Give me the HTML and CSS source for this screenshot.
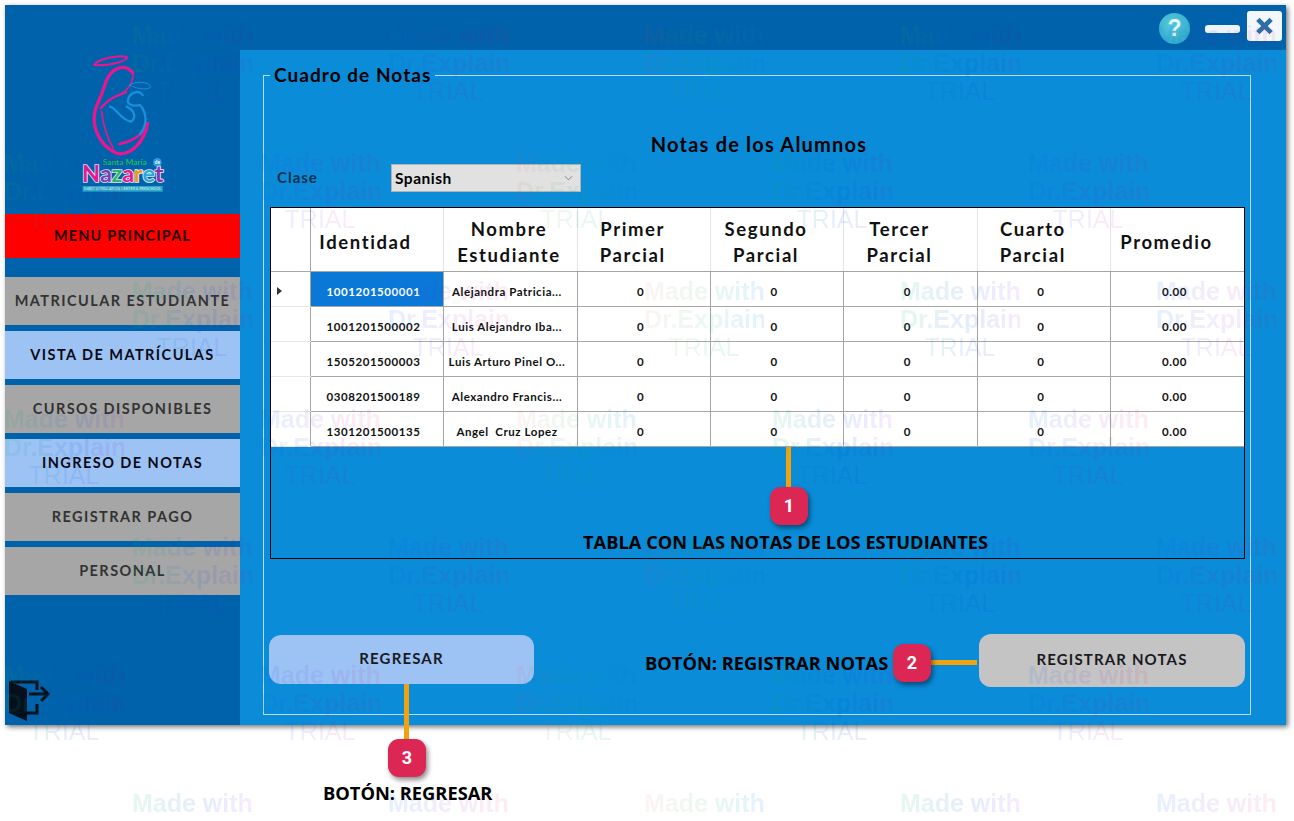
FILE: index.html
```html
<!DOCTYPE html>
<html lang="es">
<head>
<meta charset="utf-8">
<title>Cuadro de Notas</title>
<link rel="stylesheet" href="styles.css">
</head>
<body>
<div class="page">
  <div class="window">
    <aside class="sidebar">
      <svg class="logo" viewBox="0 0 360 480" role="img" aria-label="Santa María de Nazaret">
        <g class="pink">
          <path d="M103 75C112 58 170 44 200 50C208 60 160 78 103 75Z" stroke-width="6"/>
          <path d="M218 98C195 70 155 80 138 125C128 155 118 180 107 205C92 255 115 315 170 340C220 350 255 295 263 250" stroke-width="10"/>
          <path d="M218 98C222 125 205 150 178 165" stroke-width="5"/>
          <path d="M122 205C145 175 170 168 198 156" stroke-width="7"/>
          <path d="M125 215C130 260 145 300 160 325" stroke-width="5"/>
          <path d="M178 312C215 305 250 285 263 250" stroke-width="8"/>
        </g>
        <g class="blue">
          <path d="M208 135C225 122 268 125 272 140C268 150 235 150 208 135Z" stroke-width="3"/>
          <path d="M248 165C235 148 208 158 205 178C198 190 215 200 235 196" stroke-width="7"/>
          <path d="M150 200C170 205 178 235 212 245C232 232 222 210 200 200" stroke-width="7"/>
          <path d="M240 195C262 220 262 255 240 282" stroke-width="7"/>
        </g>
        <text class="logo-santa" x="128" y="374">Santa María</text>
        <circle class="logo-dot" cx="292" cy="367" r="13"/>
        <text class="logo-de" x="292" y="372">de</text>
        <text class="logo-name" x="188" y="426"><tspan class="c1">N</tspan><tspan class="c2">a</tspan><tspan class="c3">z</tspan><tspan class="c4">a</tspan><tspan class="c5">r</tspan><tspan class="c6">e</tspan><tspan class="c7">t</tspan></text>
        <rect class="logo-band" x="68" y="438" width="240" height="17"/>
        <text class="logo-sub" x="188" y="450">EARLY STIMULATION CENTER &amp; PRESCHOOL</text>
      </svg>
      <div class="menu-head">MENU PRINCIPAL</div>
      <nav class="menu">
        <a class="item grey">MATRICULAR ESTUDIANTE</a>
        <a class="item light">VISTA DE MATRÍCULAS</a>
        <a class="item grey">CURSOS DISPONIBLES</a>
        <a class="item light">INGRESO DE NOTAS</a>
        <a class="item grey">REGISTRAR PAGO</a>
        <a class="item grey">PERSONAL</a>
      </nav>
      <svg class="exit" viewBox="0 0 42 42" aria-label="Salir">
        <path class="exit-door" d="M0 1L18 9V41L0 33Z"/>
        <path class="exit-line" d="M2 2H28V10M28 24V33H18"/>
        <path class="exit-line" d="M20 14H39M32 7L39 14L32 21"/>
      </svg>
    </aside>
    <main class="main">
      <header class="topbar">
        <button class="help">?</button>
        <span class="minimize"></span>
        <button class="close">
          <svg viewBox="0 0 20 20"><path d="M3 3L17 17M17 3L3 17"/></svg>
        </button>
      </header>
      <fieldset class="frame">
        <legend class="legend">Cuadro de Notas</legend>
        <h1 class="title">Notas de los Alumnos</h1>
        <div class="filter">
          <label class="filter-label">Clase</label>
          <div class="combo"><span>Spanish</span>
            <svg viewBox="0 0 10 6"><path d="M1 1L5 5L9 1"/></svg>
          </div>
        </div>
        <div class="grid-wrap">
          <table class="grid">
            <colgroup>
              <col class="c-head"><col class="c-id"><col class="c-name"><col class="c-n"><col class="c-n"><col class="c-n"><col class="c-n"><col class="c-n">
            </colgroup>
            <thead>
              <tr>
                <th></th><th>Identidad</th><th>Nombre<br>Estudiante</th><th>Primer<br>Parcial</th><th>Segundo<br>Parcial</th><th>Tercer<br>Parcial</th><th>Cuarto<br>Parcial</th><th>Promedio</th>
              </tr>
            </thead>
            <tbody>
              <tr><td class="rh"><span class="arrow"></span></td><td class="sel">1001201500001</td><td>Alejandra Patricia...</td><td>0</td><td>0</td><td>0</td><td>0</td><td>0.00</td></tr>
              <tr><td class="rh"></td><td>1001201500002</td><td>Luis Alejandro Iba...</td><td>0</td><td>0</td><td>0</td><td>0</td><td>0.00</td></tr>
              <tr><td class="rh"></td><td>1505201500003</td><td>Luis Arturo Pinel O...</td><td>0</td><td>0</td><td>0</td><td>0</td><td>0.00</td></tr>
              <tr><td class="rh"></td><td>0308201500189</td><td>Alexandro Francis...</td><td>0</td><td>0</td><td>0</td><td>0</td><td>0.00</td></tr>
              <tr><td class="rh"></td><td>1301201500135</td><td>Angel&nbsp; Cruz Lopez</td><td>0</td><td>0</td><td>0</td><td>0</td><td>0.00</td></tr>
            </tbody>
          </table>
        </div>
        <div class="actions">
          <button class="btn back">REGRESAR</button>
          <button class="btn save">REGISTRAR NOTAS</button>
        </div>
      </fieldset>
    </main>
  </div>

  <div class="line line-1"></div>
  <div class="badge badge-1">1</div>
  <div class="note note-1">TABLA CON LAS NOTAS DE LOS ESTUDIANTES</div>
  <div class="line line-2"></div>
  <div class="badge badge-2">2</div>
  <div class="note note-2">BOTÓN: REGISTRAR NOTAS</div>
  <div class="line line-3"></div>
  <div class="badge badge-3">3</div>
  <div class="note note-3">BOTÓN: REGRESAR</div>

  <div class="wm-layer" aria-hidden="true">
    <div class="wm-row a"><p class="wm">Made with<br>Dr.Explain<br><i>TRIAL</i></p><p class="wm">Made with<br>Dr.Explain<br><i>TRIAL</i></p><p class="wm">Made with<br>Dr.Explain<br><i>TRIAL</i></p><p class="wm">Made with<br>Dr.Explain<br><i>TRIAL</i></p><p class="wm">Made with<br>Dr.Explain<br><i>TRIAL</i></p></div>
    <div class="wm-row b"><p class="wm">Made with<br>Dr.Explain<br><i>TRIAL</i></p><p class="wm">Made with<br>Dr.Explain<br><i>TRIAL</i></p><p class="wm">Made with<br>Dr.Explain<br><i>TRIAL</i></p><p class="wm">Made with<br>Dr.Explain<br><i>TRIAL</i></p><p class="wm">Made with<br>Dr.Explain<br><i>TRIAL</i></p></div>
    <div class="wm-row a"><p class="wm">Made with<br>Dr.Explain<br><i>TRIAL</i></p><p class="wm">Made with<br>Dr.Explain<br><i>TRIAL</i></p><p class="wm">Made with<br>Dr.Explain<br><i>TRIAL</i></p><p class="wm">Made with<br>Dr.Explain<br><i>TRIAL</i></p><p class="wm">Made with<br>Dr.Explain<br><i>TRIAL</i></p></div>
    <div class="wm-row b"><p class="wm">Made with<br>Dr.Explain<br><i>TRIAL</i></p><p class="wm">Made with<br>Dr.Explain<br><i>TRIAL</i></p><p class="wm">Made with<br>Dr.Explain<br><i>TRIAL</i></p><p class="wm">Made with<br>Dr.Explain<br><i>TRIAL</i></p><p class="wm">Made with<br>Dr.Explain<br><i>TRIAL</i></p></div>
    <div class="wm-row a"><p class="wm">Made with<br>Dr.Explain<br><i>TRIAL</i></p><p class="wm">Made with<br>Dr.Explain<br><i>TRIAL</i></p><p class="wm">Made with<br>Dr.Explain<br><i>TRIAL</i></p><p class="wm">Made with<br>Dr.Explain<br><i>TRIAL</i></p><p class="wm">Made with<br>Dr.Explain<br><i>TRIAL</i></p></div>
    <div class="wm-row b"><p class="wm">Made with<br>Dr.Explain<br><i>TRIAL</i></p><p class="wm">Made with<br>Dr.Explain<br><i>TRIAL</i></p><p class="wm">Made with<br>Dr.Explain<br><i>TRIAL</i></p><p class="wm">Made with<br>Dr.Explain<br><i>TRIAL</i></p><p class="wm">Made with<br>Dr.Explain<br><i>TRIAL</i></p></div>
    <div class="wm-row a"><p class="wm">Made with</p><p class="wm">Made with</p><p class="wm">Made with</p><p class="wm">Made with</p><p class="wm">Made with</p></div>
  </div>
</div>
</body>
</html>
```
FILE: styles.css
```css
* { box-sizing: border-box; }
html, body { margin: 0; padding: 0; background: #fff; }
body { font-family: "Lato", "Liberation Sans", sans-serif; color: #000; }
.page { position: relative; width: 1294px; height: 821px; overflow: hidden; padding: 5px 8px 0 5px; }

.window { display: flex; width: 1281px; height: 720px; background: #0062aa; box-shadow: 2px 2px 5px rgba(0,0,0,.55); }

.sidebar { width: 235px; flex: none; display: flex; flex-direction: column; }
.logo { width: 120px; height: 160px; margin: 35px 0 14px 55px; flex: none; }
.pink path { fill: none; stroke: #e8178f; stroke-linecap: round; }
.blue path { fill: none; stroke: #1b8fdc; stroke-linecap: round; }
.logo-santa { font: 700 25px "Lato", sans-serif; fill: #22b85c; }
.logo-dot { fill: #2a9be0; }
.logo-de { font: 700 14px "Lato", sans-serif; fill: #fff; text-anchor: middle; }
.logo-name { font: 700 70px "Lato", sans-serif; text-anchor: middle; stroke: #e9e9f2; stroke-width: 5px; paint-order: stroke; letter-spacing: -.5px; }
.c1 { fill: #e8178f; } .c2 { fill: #7a3fb8; } .c3 { fill: #2fb46a; } .c4 { fill: #e8178f; } .c5 { fill: #f09a1a; } .c6 { fill: #2aa8d8; } .c7 { fill: #8a2fb0; }
.logo-band { fill: #2fa9c9; }
.logo-sub { font: 400 11px "Lato", sans-serif; fill: #d8f2f8; text-anchor: middle; }

.menu-head { height: 44px; flex: none; padding-bottom: 2px; background: #ff0000; display: flex; align-items: center; justify-content: center; font-size: 14.5px; font-weight: 700; letter-spacing: 1.15px; color: #1c0000; }
.menu { display: flex; flex-direction: column; gap: 6px; margin-top: 19px; }
.item { height: 48px; padding-bottom: 2px; display: flex; align-items: center; justify-content: center; font-size: 14.5px; font-weight: 700; letter-spacing: 1.45px; }
.item.grey { background: #a6a6a6; color: #333; }
.item.light { background: #9dc3f5; color: #0a0a14; }
.exit { width: 42px; height: 42px; margin: auto 0 3px 4px; flex: none; }
.exit-door { fill: #05101c; }
.exit-line { fill: none; stroke: #05101c; stroke-width: 3; }

.main { flex: 1; min-width: 0; display: flex; flex-direction: column; background: linear-gradient(#0062aa 45px, #0a8cd9 45px); }
.topbar { height: 45px; flex: none; display: flex; align-items: center; justify-content: flex-end; padding: 0 4px 0 0; }
.help { width: 31px; height: 31px; margin: 1px 15px 0 0; padding: 0; border: 0; border-radius: 50%; background: radial-gradient(circle at 40% 35%, #55c8dc, #25a3c6); color: #e4f7fb; font: 700 23px/31px "Liberation Sans", sans-serif; }
.minimize { width: 35px; height: 8px; margin: 2px 7px 0 0; border-radius: 3px; background: #eef4fb; }
.close { width: 35px; height: 30px; margin-top: -3px; padding: 4px 8px; border: 0; border-radius: 3px; background: #f3f7fb; }
.close svg { display: block; width: 19px; height: 22px; }
.close path { fill: none; stroke: #2f6fa8; stroke-width: 5; }

.frame { flex: 1; min-height: 0; min-width: 0; margin: 15px 35px 10px 23px; padding: 0; background: #0a8cd9; border: 1px solid #b9dcf3; }
.legend { margin-left: 6px; padding: 0 4px; height: 20px; font-size: 19px; line-height: 20px; font-weight: 700; letter-spacing: 1.05px; }
.title { margin: 47px 0 0 4px; height: 24px; font-size: 20px; line-height: 24px; font-weight: 700; letter-spacing: 1.2px; text-align: center; }
.filter { display: flex; align-items: center; height: 28px; margin: 8px 0 0 13px; }
.filter-label { width: 114px; padding-bottom: 2px; font-size: 15px; font-weight: 700; letter-spacing: 1px; color: #08304e; }
.combo { width: 190px; height: 28px; display: flex; align-items: center; justify-content: space-between; padding: 0 7px 0 3px; background: #e1e1e1; border: 1px solid #b2b2b2; font-size: 15.5px; font-weight: 700; letter-spacing: .5px; }
.combo svg { width: 9px; height: 6px; }
.combo path { fill: none; stroke: #777; stroke-width: 1; }

.grid-wrap { width: 975px; height: 352px; margin: 15px 0 0 6px; border: 1px solid #000; }
.grid { width: 973px; table-layout: fixed; border-collapse: collapse; background: #fff; }
.c-head { width: 39px; } .c-id { width: 133px; } .c-name { width: 134px; } .c-n { width: 133.4px; }
.grid th { height: 63px; padding: 6px 22px 0 0; font-size: 18.5px; line-height: 26px; font-weight: 700; letter-spacing: 1.6px; color: #111; border-right: 1px solid #e3e3e3; border-bottom: 1px solid #a6a6a6; white-space: nowrap; }
.grid th:nth-child(3) { padding-right: 2px; }
.grid th:nth-child(2) { padding-right: 22px; }
.grid th:first-child { border-right-color: #a6a6a6; padding: 0; }
.grid th:last-child { border-right: 0; }
.grid td { height: 35px; padding: 5px 6px 0 0; text-align: center; font-size: 11.5px; font-weight: 700; letter-spacing: .55px; color: #111; border-right: 1px solid #a6a6a6; border-bottom: 1px solid #a6a6a6; white-space: nowrap; overflow: hidden; }
.grid td:last-child { border-right: 0; }
.grid td.rh { padding: 5px 0 0 6px; text-align: left; border-bottom-color: #e6e6e6; }
.grid td.sel { background: #0a78d7; color: #fff; }
.arrow { display: block; width: 0; height: 0; border-left: 5px solid #333; border-top: 4px solid transparent; border-bottom: 4px solid transparent; }

.actions { display: flex; justify-content: space-between; align-items: flex-start; margin: 75px 0 0 5px; width: 976px; }
.btn { border: 0; border-radius: 12px; padding: 0 0 4px; font-family: "Lato", sans-serif; font-size: 15px; font-weight: 700; letter-spacing: 1.15px; color: #1a1a22; }
.back { width: 265px; height: 49px; margin-top: 1px; background: #9dc3f5; }
.save { width: 266px; height: 53px; background: #c4c4c4; }

.badge { position: absolute; width: 38px; height: 38px; border-radius: 11px; background: #dc2754; color: #fff; font: 700 18px/38px "Roboto", sans-serif; text-align: center; box-shadow: 2px 3px 5px rgba(0,0,0,.45); }
.badge-1 { left: 770px; top: 487px; }
.badge-2 { left: 893px; top: 644px; }
.badge-3 { left: 388px; top: 739px; }
.line { position: absolute; background: #f0a30f; }
.line-1 { left: 786px; top: 447px; width: 5px; height: 41px; }
.line-2 { left: 930px; top: 660px; width: 47px; height: 5px; }
.line-3 { left: 404px; top: 684px; width: 5px; height: 56px; }
.note { position: absolute; font: 700 18.3px/22px "Open Sans", sans-serif; color: #000; white-space: nowrap; }
.note-1 { left: 583px; top: 531px; }
.note-2 { left: 645px; top: 652px; }
.note-3 { left: 323px; top: 782px; }

.wm-layer { position: absolute; inset: 21px 0 0 0; pointer-events: none; overflow: hidden; }
.wm-row { display: flex; height: 128px; }
.wm-row.a { padding-left: 132px; }
.wm-row.b { padding-left: 4px; }
.wm { flex: none; width: 120px; margin: 0 136px 0 0; font: 700 25px/28px "Liberation Sans", sans-serif; text-align: center; white-space: nowrap; color: transparent; -webkit-background-clip: text; background-clip: text; background-image: linear-gradient(90deg, rgba(0,190,90,.1), rgba(0,70,240,.1) 60%, rgba(150,0,190,.08)); }
.wm i { font-style: normal; font-weight: 400; }
.wm:nth-child(3n+2) { background-image: linear-gradient(90deg, rgba(0,110,240,.1), rgba(150,0,200,.08) 60%, rgba(230,0,60,.07)); }
.wm:nth-child(3n) { background-image: linear-gradient(90deg, rgba(230,60,60,.06), rgba(0,190,90,.09) 55%, rgba(0,110,240,.1)); }
```
